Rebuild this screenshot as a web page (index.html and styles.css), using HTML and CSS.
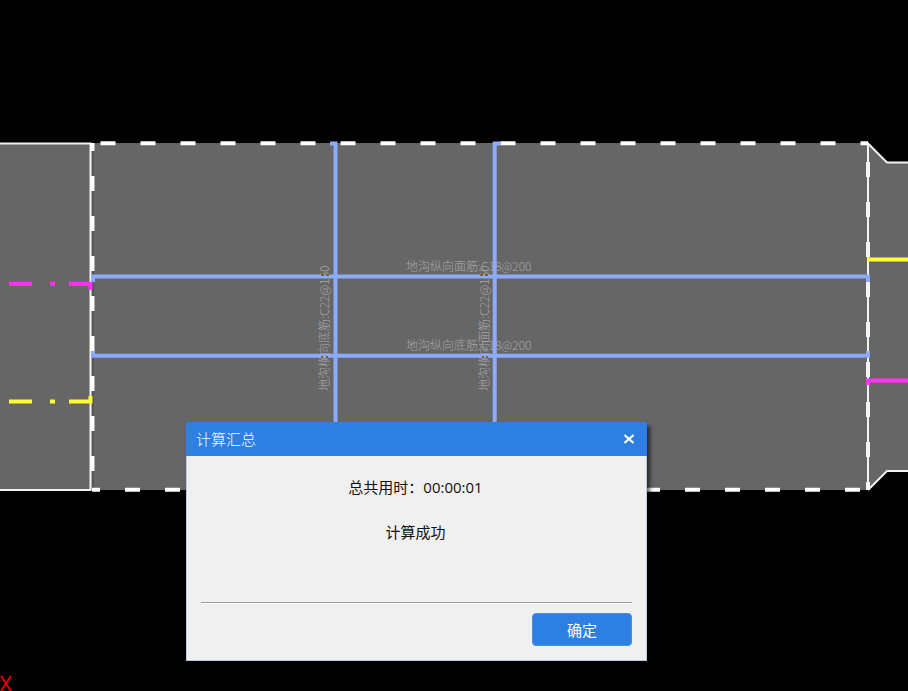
FILE: index.html
```html
<!DOCTYPE html>
<html lang="zh-CN">
<head>
<meta charset="utf-8">
<meta name="viewport" content="width=device-width, initial-scale=1">
<title>计算汇总</title>
<link rel="stylesheet" href="styles.css">
</head>
<body>
<main class="workspace">
  <svg class="drawing" viewBox="0 0 908 691" preserveAspectRatio="xMinYMin slice" aria-hidden="true">
    <!-- slabs -->
    <path class="slab" d="M0 143H868L887 162H908V471H887L868 490H0Z"/>

    <!-- outlines -->
    <path class="outline" d="M0 143.500H90.500V490H0"/>
    <path class="outline" d="M868 490V143.500L887 162.500H908M868 490L887 471H908"/>
    <path class="gap" d="M93 143V490"/>
    <path class="dash" stroke-dasharray="15 25" d="M100.500 143.300H868"/>
    <path class="dash" stroke-dasharray="15 25" stroke-dashoffset="7" d="M92 489.800H868"/>
    <path class="dash" stroke-dasharray="15 25" stroke-dashoffset="7" d="M92.500 143V490"/>
    <path class="dash soft" stroke-dasharray="15 25" d="M868 162V490"/>

    <!-- labels -->
    <g class="note">
      <text x="406" y="271">地沟纵向面筋:C18@200</text>
      <text x="406" y="350">地沟纵向底筋:C18@200</text>
      <text transform="translate(329 391) rotate(-90)">地沟横向底筋:C22@150</text>
      <text transform="translate(489 391) rotate(-90)">地沟横向面筋:C22@150</text>
    </g>

    <!-- rebars -->
    <g class="rebar">
      <path d="M93 282V276.500H868V282"/>
      <path d="M93 351V355.700H868V351"/>
      <path d="M330 143.500H335.500V490"/>
      <path d="M501 143.500H494.700V490"/>
    </g>
    <path class="crossing" d="M321 275h3m2 0h3M321 357h2m3 0h2M480 275h3m2 0h3M482 357h2m2 0h2"/>
    <path class="magenta" d="M9 283.800H32M50 283.800H55M69 283.800H90.500V290M868 385V380.500H908"/>
    <path class="yellow" d="M9 401.600H32M50 401.600H55M69 401.600H90.500V396M867 259.500H908"/>

    <path class="axis" d="M1 676L11 691M11 676L1 691"/>
  </svg>

  <section class="dialog" role="dialog" aria-labelledby="dialog-title">
    <header class="titlebar">
      <h1 class="title" id="dialog-title">计算汇总</h1>
      <button class="close" type="button" aria-label="关闭">
        <svg class="close-icon" viewBox="0 0 10 10" aria-hidden="true"><path d="M.5 1L9.500 9M9.500 1L.5 9"/></svg>
      </button>
    </header>
    <div class="content">
      <p class="message">总共用时：00:00:01</p>
      <p class="message">计算成功</p>
    </div>
    <footer class="actions">
      <button class="confirm" type="button">确定</button>
    </footer>
  </section>
</main>
</body>
</html>
```
FILE: styles.css
```css
* {
  box-sizing: border-box;
}

body {
  margin: 0;
  background: #000;
  font-family: "Open Sans", "Noto Sans CJK SC", sans-serif;
  font-size: 15px;
}

.workspace {
  position: relative;
  min-height: 100vh;
  overflow: hidden;
}

.drawing {
  position: absolute;
  inset: 0;
  width: 100%;
  height: 100%;
}

.drawing path {
  fill: none;
}

.drawing .slab {
  fill: #666;
}

.outline {
  stroke: #f2f2f2;
  stroke-width: 2;
}

.gap {
  stroke: #555;
  stroke-width: 2;
}

.dash {
  stroke: #fff;
  stroke-width: 4;
}

.soft {
  stroke: #f4f4f4;
}

.rebar {
  stroke: #8cabff;
  stroke-width: 4;
}

.crossing {
  stroke: #80601c;
  stroke-width: 2;
}

.magenta {
  stroke: #ff32f5;
  stroke-width: 4;
}

.yellow {
  stroke: #ffff32;
  stroke-width: 4;
}

.axis {
  stroke: #e60000;
  stroke-width: 2;
}

.note {
  fill: #a8a8a8;
  font-family: "Noto Sans CJK SC", sans-serif;
  font-size: 12px;
  font-weight: 300;
}

.dialog {
  position: absolute;
  top: 422px;
  left: 186px;
  width: 461px;
  border: 1px solid #bccadb;
  border-top: 0;
  background: #f0f0f0;
  box-shadow: 3px 4px 4px rgba(0, 0, 0, 0.6);
}

.titlebar {
  display: flex;
  align-items: center;
  justify-content: space-between;
  height: 34px;
  margin: 0 -1px;
  padding: 0 8px 0 10px;
  background: #2d80e2;
  color: #fff;
}

.title {
  margin: 0;
  font-size: 15px;
  font-weight: 300;
  line-height: 20px;
}

.close {
  display: grid;
  place-items: center;
  width: 20px;
  height: 20px;
  padding: 0;
  border: 0;
  background: transparent;
}

.close-icon {
  width: 10px;
  height: 10px;
  fill: none;
  stroke: #fff;
  stroke-width: 2;
}

.content {
  display: grid;
  gap: 20px;
  padding: 19px 16px 57px 14px;
  text-align: center;
}

.message {
  margin: 0;
  color: #111;
  line-height: 25px;
}

.actions {
  display: flex;
  justify-content: flex-end;
  margin: 0 14px;
  padding: 10px 0 14px;
  border-top: 1px solid #a0a0a0;
  box-shadow: inset 0 1px #fff;
}

.confirm {
  width: 100px;
  height: 33px;
  padding: 0;
  border: 1px solid #4690e8;
  border-radius: 4px;
  background: #2d80e2;
  color: #fff;
  font: inherit;
}
```
